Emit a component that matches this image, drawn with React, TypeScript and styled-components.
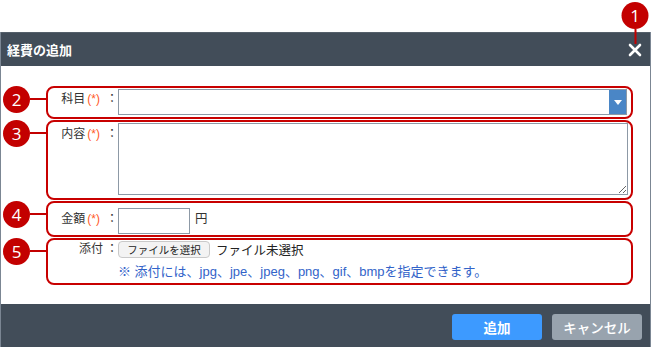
import React from "react";
import styled, { createGlobalStyle } from "styled-components";

const GlobalStyle = createGlobalStyle`
  html, body {
    margin: 0;
    background: #ffffff;
    font-family: "Liberation Sans", "Noto Sans CJK JP", sans-serif;
    color: #333333;
  }
`;

const Page = styled.div`
  padding-top: 32px;
  width: 652px;
`;

const Dialog = styled.div`
  width: 651px;
  box-sizing: border-box;
  border-left: 1px solid #7b8693;
  border-right: 1px solid #7b8693;
  display: flex;
  flex-direction: column;
`;

const Header = styled.div`
  height: 34px;
  background: #424d59;
  border-top: 1px solid #55606b;
  box-sizing: border-box;
  display: flex;
  align-items: center;
  justify-content: space-between;
  padding: 0 7px 0 6px;
`;

const Title = styled.h1`
  margin: 0;
  font-size: 13px;
  font-weight: 700;
  color: #ffffff;
`;

const CloseButton = styled.button`
  position: relative;
  width: 16px;
  height: 16px;
  padding: 0;
  border: 0;
  background: transparent;
  display: flex;
  align-items: center;
  justify-content: center;
`;

const Marker = styled.span`
  flex: none;
  width: 27px;
  height: 27px;
  border-radius: 50%;
  background: #c30000;
  color: #ffffff;
  font-family: "Open Sans", "Liberation Sans", sans-serif;
  font-size: 17px;
  line-height: 27px;
  text-align: center;
`;

const TopCallout = styled.div`
  position: absolute;
  left: 50%;
  bottom: 100%;
  transform: translateX(-50%);
  margin-bottom: -2px;
  display: flex;
  flex-direction: column;
  align-items: center;
`;

const CalloutStem = styled.span`
  width: 2px;
  height: 15px;
  background: #c30000;
`;

const Body = styled.div`
  background: #ffffff;
  padding: 20px 17px 19px 2px;
  display: flex;
  flex-direction: column;
  gap: 1px;
`;

const Item = styled.div`
  display: flex;
  align-items: flex-start;
`;

const Connector = styled.span`
  flex: none;
  width: 16px;
  height: 2px;
  margin-top: 12px;
  background: #c30000;
`;

const Frame = styled.div<{ $pad: string }>`
  flex: 1;
  border: 2px solid #c80000;
  border-radius: 8px;
  padding: ${(p) => p.$pad};
  display: flex;
  align-items: flex-start;
`;

const Label = styled.div<{ $lh: number }>`
  flex: none;
  width: 70px;
  display: flex;
  justify-content: flex-end;
  font-size: 12px;
  line-height: ${(p) => p.$lh}px;
  color: #333333;
`;

const Required = styled.span`
  color: #ff5a1f;
  font-size: 12px;
  margin-left: 2px;
  padding-right: 3px;
`;

const Colon = styled.span`
  width: 12px;
  margin-left: 3px;
  text-align: center;
`;

const SelectBox = styled.div`
  flex: 1;
  height: 26px;
  box-sizing: border-box;
  border: 1px solid #8d99a6;
  display: flex;
  justify-content: flex-end;
`;

const SelectArrow = styled.span`
  width: 17px;
  background: #4a86c6;
  display: flex;
  align-items: center;
  justify-content: center;
`;

const TextArea = styled.textarea`
  flex: 1;
  height: 72px;
  box-sizing: border-box;
  border: 1px solid #8d99a6;
  margin: 0;
  padding: 2px;
  font: inherit;
`;

const AmountInput = styled.input`
  width: 72px;
  height: 26px;
  box-sizing: border-box;
  border: 1px solid #8d99a6;
  margin: 0;
  padding: 0 4px;
`;

const Unit = styled.span`
  margin-left: 5px;
  font-size: 12.5px;
  line-height: 22px;
`;

const FileColumn = styled.div`
  display: flex;
  flex-direction: column;
`;

const FileLine = styled.div`
  display: flex;
  align-items: center;
  height: 18px;
`;

const FileButton = styled.button`
  height: 17px;
  width: 92px;
  padding: 0;
  box-sizing: border-box;
  border: 1px solid #c9c9c9;
  border-radius: 4px;
  background: #f3f3f3;
  font-family: "Noto Sans CJK JP", sans-serif;
  font-size: 10.5px;
  line-height: 15px;
  color: #222222;
`;

const FileStatus = styled.span`
  margin-left: 6px;
  font-size: 12.5px;
  color: #222222;
`;

const Note = styled.p`
  margin: 6px 0 0;
  font-size: 13px;
  line-height: 16px;
  color: #3263c9;
`;

const Footer = styled.div`
  height: 45px;
  background: #424d59;
  display: flex;
  align-items: center;
  justify-content: flex-end;
  gap: 10px;
  padding-right: 8px;
`;

const ActionButton = styled.button<{ $primary?: boolean }>`
  width: 90px;
  height: 26px;
  border: 0;
  border-radius: 3px;
  background: ${(p) => (p.$primary ? "#3d9aff" : "#98a3ae")};
  color: #ffffff;
  font-family: "Noto Sans CJK JP", sans-serif;
  font-size: 13.5px;
  font-weight: ${(p) => (p.$primary ? 700 : 500)};
`;

function CloseIcon() {
  return (
    <svg width="14" height="14" viewBox="0 0 14 14">
      <path d="M2 2 L12 12 M12 2 L2 12" stroke="#ffffff" strokeWidth="2.6" strokeLinecap="round" />
    </svg>
  );
}

function Caret() {
  return (
    <svg width="8" height="5" viewBox="0 0 8 5">
      <path d="M0 0 H8 L4 5 Z" fill="#ffffff" />
    </svg>
  );
}

interface FieldLabelProps {
  text: string;
  required?: boolean;
  lh: number;
}

function FieldLabel({ text, required, lh }: FieldLabelProps) {
  return (
    <Label $lh={lh}>
      {text}
      {required && <Required>(*)</Required>}
      <Colon>：</Colon>
    </Label>
  );
}

export default function App() {
  return (
    <Page>
      <GlobalStyle />
      <Dialog>
        <Header>
          <Title>経費の追加</Title>
          <CloseButton aria-label="閉じる">
            <TopCallout>
              <Marker>1</Marker>
              <CalloutStem />
            </TopCallout>
            <CloseIcon />
          </CloseButton>
        </Header>

        <Body>
          <Item>
            <Marker>2</Marker>
            <Connector />
            <Frame $pad="1px 4px 2px 0">
              <FieldLabel text="科目" required lh={20} />
              <SelectBox>
                <SelectArrow>
                  <Caret />
                </SelectArrow>
              </SelectBox>
            </Frame>
          </Item>

          <Item>
            <Marker>3</Marker>
            <Connector />
            <Frame $pad="1px 3px 3px 0">
              <FieldLabel text="内容" required lh={22} />
              <TextArea />
            </Frame>
          </Item>

          <Item>
            <Marker>4</Marker>
            <Connector />
            <Frame $pad="5px 4px 1px 0">
              <FieldLabel text="金額" required lh={22} />
              <AmountInput />
              <Unit>円</Unit>
            </Frame>
          </Item>

          <Item>
            <Marker>5</Marker>
            <Connector />
            <Frame $pad="0 4px 3px 0">
              <FieldLabel text="添付" lh={18} />
              <FileColumn>
                <FileLine>
                  <FileButton>ファイルを選択</FileButton>
                  <FileStatus>ファイル未選択</FileStatus>
                </FileLine>
                <Note>※ 添付には、jpg、jpe、jpeg、png、gif、bmpを指定できます。</Note>
              </FileColumn>
            </Frame>
          </Item>
        </Body>

        <Footer>
          <ActionButton $primary>追加</ActionButton>
          <ActionButton>キャンセル</ActionButton>
        </Footer>
      </Dialog>
    </Page>
  );
}
